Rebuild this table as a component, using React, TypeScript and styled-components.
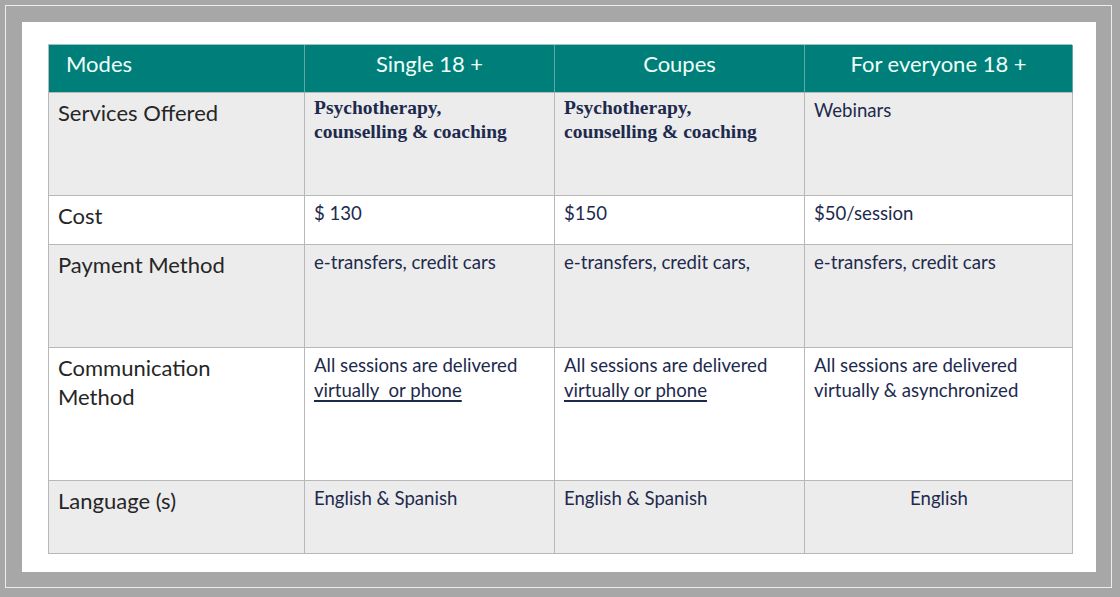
import { Fragment } from 'react';
import styled, { createGlobalStyle } from 'styled-components';

const GlobalStyle = createGlobalStyle`
  html, body {
    margin: 0;
    padding: 0;
    background: #a7a7a7;
  }
  * {
    box-sizing: border-box;
  }
`;

type Row = {
  label: string[];
  cells: { text: string[]; serif?: boolean; underline?: number; center?: boolean }[];
  shade: boolean;
};

const headers = ['Modes', 'Single 18 +', 'Coupes', 'For everyone 18 +'];

const rows: Row[] = [
  {
    label: ['Services Offered'],
    shade: true,
    cells: [
      { text: ['Psychotherapy,', 'counselling & coaching'], serif: true },
      { text: ['Psychotherapy,', 'counselling & coaching'], serif: true },
      { text: ['Webinars'] },
    ],
  },
  {
    label: ['Cost'],
    shade: false,
    cells: [{ text: ['$ 130'] }, { text: ['$150'] }, { text: ['$50/session'] }],
  },
  {
    label: ['Payment Method'],
    shade: true,
    cells: [
      { text: ['e-transfers, credit cars'] },
      { text: ['e-transfers, credit cars,'] },
      { text: ['e-transfers, credit cars'] },
    ],
  },
  {
    label: ['Communication', 'Method'],
    shade: false,
    cells: [
      { text: ['All sessions are delivered', 'virtually\u00a0 or phone'], underline: 1 },
      { text: ['All sessions are delivered', 'virtually or phone'], underline: 1 },
      { text: ['All sessions are delivered', 'virtually & asynchronized'] },
    ],
  },
  {
    label: ['Language (s)'],
    shade: true,
    cells: [
      { text: ['English & Spanish'] },
      { text: ['English & Spanish'] },
      { text: ['English'], center: true },
    ],
  },
];

export default function App() {
  return (
    <>
      <GlobalStyle />
      <Page>
        <Frame>
          <Panel>
            <Table>
              {headers.map((h, i) => (
                <HeadCell key={h} $first={i === 0}>
                  {h}
                </HeadCell>
              ))}
              {rows.map((row) => (
                <Fragment key={row.label[0]}>
                  <LabelCell $shade={row.shade}>
                    {row.label.map((l) => (
                      <Line key={l}>{l}</Line>
                    ))}
                  </LabelCell>
                  {row.cells.map((c, ci) => (
                    <DataCell key={ci} $shade={row.shade} $serif={c.serif} $center={c.center}>
                      {c.text.map((t, ti) => (
                        <Line key={ti}>
                          {c.underline === ti ? <Underlined>{t}</Underlined> : t}
                        </Line>
                      ))}
                    </DataCell>
                  ))}
                </Fragment>
              ))}
            </Table>
          </Panel>
        </Frame>
      </Page>
    </>
  );
}

const Page = styled.div`
  width: 1120px;
  height: 597px;
  padding: 5px 8px 9px 5px;
  background: #a7a7a7;
`;

const Frame = styled.div`
  width: 100%;
  height: 100%;
  border: 1px solid #ececec;
  padding: 16px 15px 15px 16px;
  background: #a7a7a7;
`;

const Panel = styled.div`
  width: 100%;
  height: 100%;
  background: #ffffff;
  padding: 22px 24px 18px 26px;
`;

const Table = styled.div`
  display: grid;
  grid-template-columns: 256px 250px 250px 268px;
  grid-template-rows: 48px 103px 49px 103px 133px 73px;
  border-top: 1px solid #9cc7c4;
  border-left: 1px solid #b8b8b8;
`;

const HeadCell = styled.div<{ $first?: boolean }>`
  background: #007f7a;
  color: #effff9;
  font-family: Lato, 'Open Sans', sans-serif;
  font-size: 22px;
  line-height: 29px;
  padding: 4px 10px 0 ${(p) => (p.$first ? '17px' : '10px')};
  text-align: ${(p) => (p.$first ? 'left' : 'center')};
  border-right: 1px solid #5fa8a3;
  border-bottom: 1px solid #b8b8b8;
`;

const LabelCell = styled.div<{ $shade: boolean }>`
  background: ${(p) => (p.$shade ? '#ececec' : '#ffffff')};
  color: #262626;
  font-family: Lato, 'Open Sans', sans-serif;
  font-size: 22px;
  line-height: 29px;
  padding: 5px 8px 0 9px;
  border-right: 1px solid #b8b8b8;
  border-bottom: 1px solid #b8b8b8;
`;

const DataCell = styled.div<{ $shade: boolean; $serif?: boolean; $center?: boolean }>`
  background: ${(p) => (p.$shade ? '#ececec' : '#ffffff')};
  color: #1d2a4d;
  font-family: ${(p) => (p.$serif ? "'Liberation Serif', 'Times New Roman', serif" : "Lato, 'Open Sans', sans-serif")};
  font-weight: ${(p) => (p.$serif ? 700 : 400)};
  font-size: ${(p) => (p.$serif ? '19.5px' : '18.6px')};
  line-height: ${(p) => (p.$serif ? '24px' : '25px')};
  padding: ${(p) => (p.$serif ? '3px' : '5px')} 8px 0 9px;
  text-align: ${(p) => (p.$center ? 'center' : 'left')};
  border-right: 1px solid #b8b8b8;
  border-bottom: 1px solid #b8b8b8;
`;

const Line = styled.div`
  white-space: nowrap;
`;

const Underlined = styled.span`
  text-decoration: underline;
  text-decoration-thickness: 1.5px;
  text-underline-offset: 3px;
  white-space: pre;
`;
